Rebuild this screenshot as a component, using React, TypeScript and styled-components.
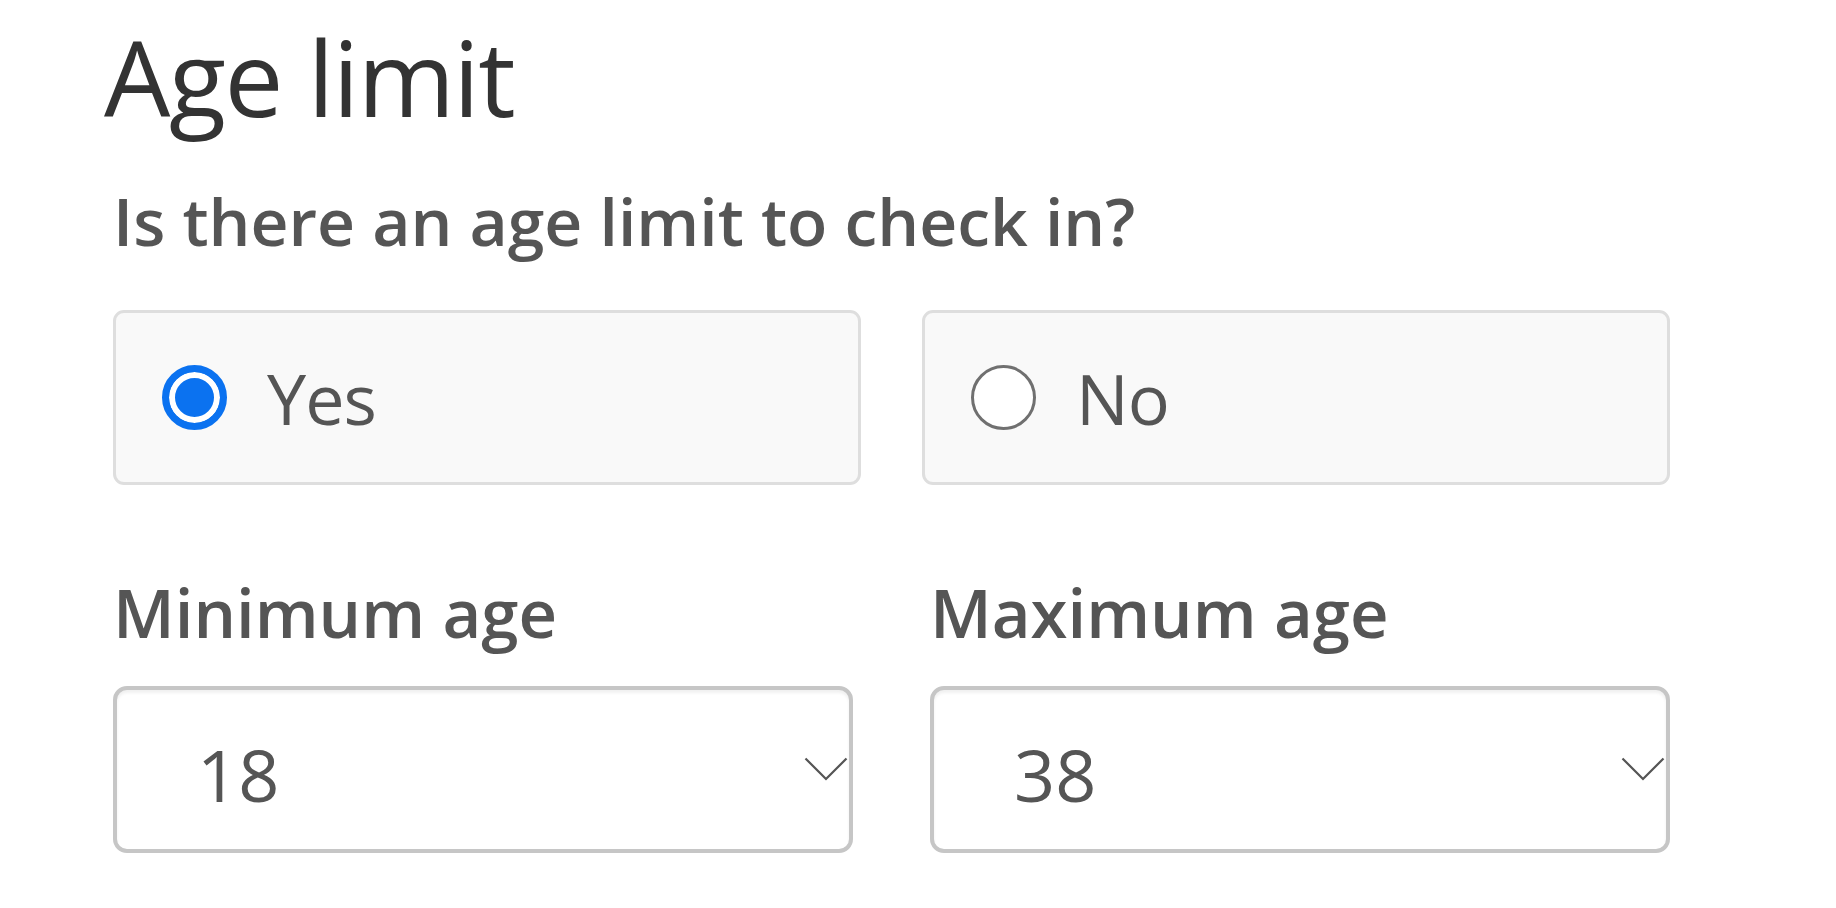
import React, { useState } from 'react'
import styled, { createGlobalStyle } from 'styled-components'

const GlobalStyle = createGlobalStyle`
    html, body {
        margin: 0;
        padding: 0;
        background: #ffffff;
    }
    body {
        font-family: "Open Sans", "Noto Sans", sans-serif;
    }
`

const AgeLimitForm = () => {
    const [limited, setLimited] = useState(true)
    const [minAge, setMinAge] = useState('18')
    const [maxAge, setMaxAge] = useState('38')

    return (
        <Page>
            <Title>Age limit</Title>
            <Question>Is there an age limit to check in?</Question>

            <ChoiceRow>
                <Choice onClick={() => setLimited(true)}>
                    <RadioDot checked={limited} />
                    <ChoiceText>Yes</ChoiceText>
                </Choice>
                <Choice onClick={() => setLimited(false)}>
                    <RadioDot checked={!limited} />
                    <ChoiceText>No</ChoiceText>
                </Choice>
            </ChoiceRow>

            <SelectRow>
                <Field>
                    <FieldLabel>Minimum age</FieldLabel>
                    <SelectBox>
                        <SelectValue>{minAge}</SelectValue>
                        <Chevron />
                    </SelectBox>
                </Field>
                <Field>
                    <FieldLabel>Maximum age</FieldLabel>
                    <SelectBox>
                        <SelectValue>{maxAge}</SelectValue>
                        <Chevron />
                    </SelectBox>
                </Field>
            </SelectRow>
        </Page>
    )
}

const Chevron = () => (
    <ChevronIcon viewBox="0 0 44 24" width="44" height="24">
        <path d="M1.5 1.5 L22 22 L42.5 1.5" fill="none" stroke="#555555" strokeWidth="2.2" />
    </ChevronIcon>
)

const Page = styled.div`
    width: 1557px;
    padding: 24px 0 0 113px;
    box-sizing: content-box;
`

const Title = styled.h1`
    margin: 0 0 0 -9px;
    font-size: 105px;
    line-height: 1;
    font-weight: 400;
    letter-spacing: -1.5px;
    color: #333333;
`

const Question = styled.h2`
    margin: 58px 0 0 0;
    font-size: 66px;
    line-height: 1;
    font-weight: 600;
    color: #555555;
`

const ChoiceRow = styled.div`
    display: grid;
    grid-template-columns: 1fr 1fr;
    gap: 61px;
    margin-top: 57px;
`

const Choice = styled.div`
    display: flex;
    align-items: center;
    height: 175px;
    box-sizing: border-box;
    padding-left: 46px;
    background: #f9f9f9;
    border: 3px solid #dedede;
    border-radius: 11px;
    cursor: pointer;
`

const RadioDot = styled.span<{ checked: boolean }>`
    flex: none;
    width: 65px;
    height: 65px;
    box-sizing: border-box;
    border-radius: 50%;
    border: ${p => p.checked ? '7px solid #0b72f0' : '3.5px solid #707070'};
    box-shadow: ${p => p.checked ? 'inset 0 0 0 6px #ffffff' : 'none'};
    background: ${p => p.checked ? '#0b72f0' : '#ffffff'};
`

const ChoiceText = styled.span`
    margin-left: 40px;
    font-size: 70px;
    line-height: 1;
    letter-spacing: -1px;
    color: #555555;
`

const SelectRow = styled.div`
    display: grid;
    grid-template-columns: 1fr 1fr;
    gap: 77px;
    margin-top: 94px;
`

const Field = styled.div`
    display: flex;
    flex-direction: column;
`

const FieldLabel = styled.label`
    font-size: 67px;
    line-height: 1;
    font-weight: 600;
    color: #555555;
    margin-bottom: 40px;
`

const SelectBox = styled.div`
    display: flex;
    align-items: center;
    justify-content: space-between;
    height: 167px;
    box-sizing: border-box;
    padding: 0 1px 0 80px;
    background: #ffffff;
    border: 4px solid #c6c6c6;
    border-radius: 14px;
    box-shadow: inset 0 3px 3px rgba(0, 0, 0, 0.06);
`

const SelectValue = styled.span`
    font-size: 72px;
    line-height: 1;
    color: #555555;
    padding-top: 8px;
`

const ChevronIcon = styled.svg`
    flex: none;
    margin-top: -2px;
`

export default function App() {
    return (
        <>
            <GlobalStyle />
            <AgeLimitForm />
        </>
    )
}
